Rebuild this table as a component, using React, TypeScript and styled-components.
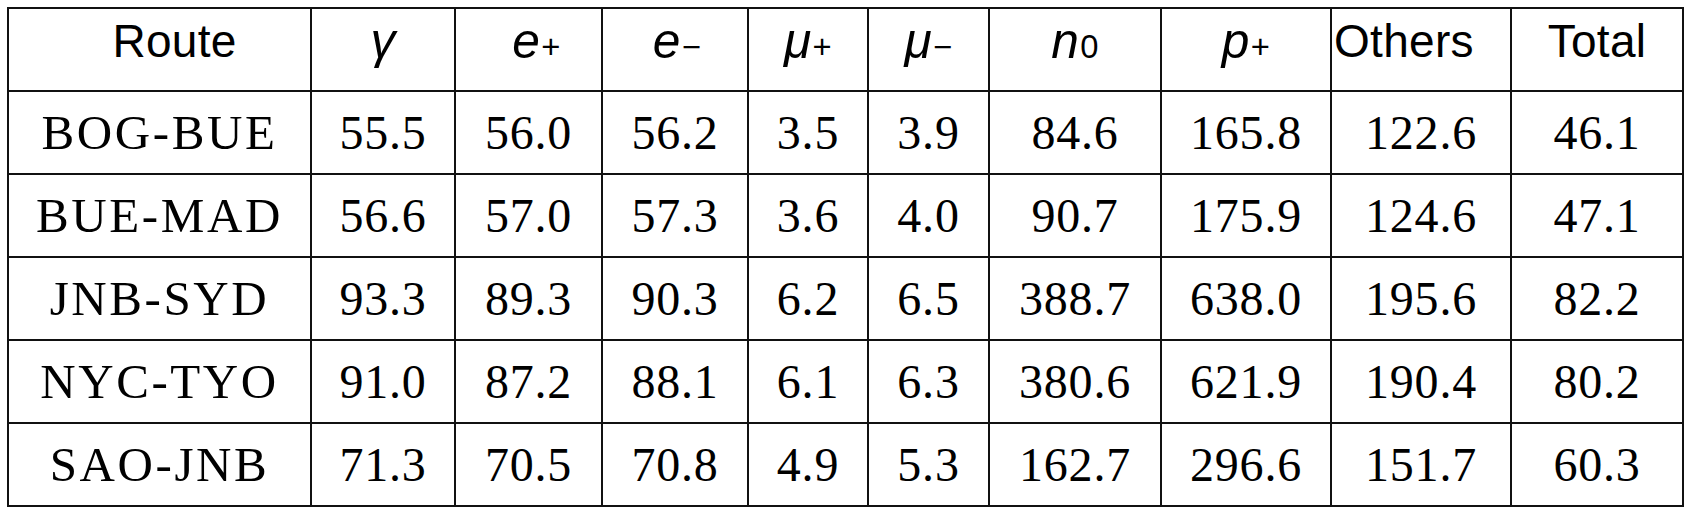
import React from 'react';
import styled, { createGlobalStyle } from 'styled-components';

const LINE = '#111';
const COLS = [303, 144, 147, 146, 120, 121, 172, 170, 180, 172];

const GlobalStyle = createGlobalStyle`
  html, body {
    margin: 0;
    background: #fff;
  }
`;

const Page = styled.div`
  padding: 7px 0 0 7px;
`;

const Grid = styled.div`
  display: inline-grid;
  grid-template-columns: ${ COLS.map(w => `${ w }px`).join(' ') };
  grid-auto-rows: 83px;
  border-top: 2px solid ${ LINE };
  border-left: 2px solid ${ LINE };
  color: #000;
`;

const Cell = styled.div`
  display: flex;
  align-items: center;
  justify-content: center;
  border-right: 2px solid ${ LINE };
  border-bottom: 2px solid ${ LINE };
  overflow: hidden;
  white-space: nowrap;
`;

const HeadCell = styled(Cell)<{ $align?: 'left' | 'center'; $shift?: number }>`
  justify-content: ${ p => p.$align === 'left' ? 'flex-start' : 'center' };
  padding-left: ${ p => p.$shift || 0 }px;
  padding-bottom: 18px;
  font-family: "Liberation Sans", Arial, sans-serif;
  font-size: 46px;
  letter-spacing: 0.3px;
`;

const RouteCell = styled(Cell)`
  font-family: "Liberation Serif", "Times New Roman", serif;
  font-size: 49px;
  letter-spacing: 2.6px;
`;

const NumCell = styled(Cell)`
  font-family: "Liberation Serif", "Times New Roman", serif;
  font-size: 48px;
  letter-spacing: 0.8px;
`;

const Sym = styled.span`
  font-style: italic;
  font-size: 1.08em;
`;

const Sub = styled.span`
  font-style: normal;
  font-size: 0.66em;
  margin-left: 1px;
`;

type Head = { label: React.ReactNode; align?: 'left' | 'center'; shift?: number };

const heads: Head[] = [
  { label: 'Route', shift: 30 },
  { label: <Sym>γ</Sym> },
  { label: <Sym>e<Sub>+</Sub></Sym>, shift: 16 },
  { label: <Sym>e<Sub>−</Sub></Sym>, shift: 4 },
  { label: <Sym>μ<Sub>+</Sub></Sym> },
  { label: <Sym>μ<Sub>−</Sub></Sym> },
  { label: <Sym>n<Sub>0</Sub></Sym> },
  { label: <Sym>p<Sub>+</Sub></Sym> },
  { label: 'Others', align: 'left', shift: 2 },
  { label: 'Total' },
];

const rows = [
  ['BOG-BUE', '55.5', '56.0', '56.2', '3.5', '3.9', '84.6', '165.8', '122.6', '46.1'],
  ['BUE-MAD', '56.6', '57.0', '57.3', '3.6', '4.0', '90.7', '175.9', '124.6', '47.1'],
  ['JNB-SYD', '93.3', '89.3', '90.3', '6.2', '6.5', '388.7', '638.0', '195.6', '82.2'],
  ['NYC-TYO', '91.0', '87.2', '88.1', '6.1', '6.3', '380.6', '621.9', '190.4', '80.2'],
  ['SAO-JNB', '71.3', '70.5', '70.8', '4.9', '5.3', '162.7', '296.6', '151.7', '60.3'],
];

const App = () => (
  <Page>
    <GlobalStyle />
    <Grid>
      { heads.map((h, i) => (
        <HeadCell key={ i } $align={ h.align } $shift={ h.shift }>{ h.label }</HeadCell>
      )) }
      { rows.map(r => r.map((v, i) => i === 0
        ? <RouteCell key={ r[0] + i }>{ v }</RouteCell>
        : <NumCell key={ r[0] + i }>{ v }</NumCell>)) }
    </Grid>
  </Page>
);

export default App;
